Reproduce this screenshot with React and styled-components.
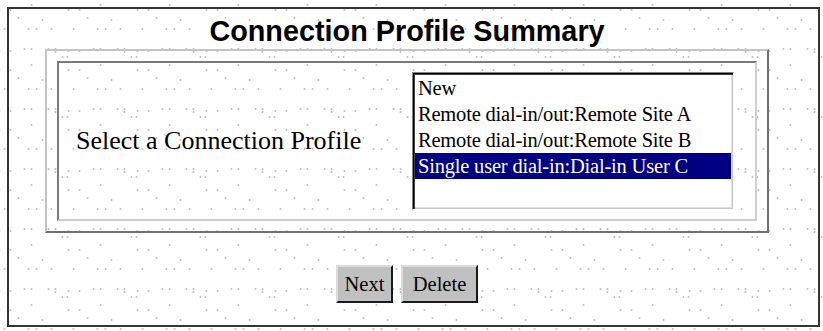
import React from "react";
import styled, { createGlobalStyle } from "styled-components";

const dots = [
  [4, 1], [19, 1], [41, 1], [65, 1], [36, 23], [47, 23],
  [16, 21], [23, 21], [23, 24], [61, 21], [68, 21], [30, 29],
  [35, 29], [68, 37], [36, 42], [47, 42], [10, 52], [55, 50],
];

const dotLayers = dots
  .map(() => "radial-gradient(circle, #c2c2c2 0.7px, transparent 1.3px)")
  .join(", ");
const dotPositions = dots.map(([x, y]) => `${x - 2}px ${y - 2}px`).join(", ");

const GlobalStyle = createGlobalStyle`
  html, body {
    margin: 0;
    padding: 0;
    background: #ffffff;
  }
  body {
    font-family: "Liberation Serif", "Times New Roman", serif;
    background-image: ${dotLayers};
    background-size: 69px 60px;
    background-position: ${dotPositions};
    background-repeat: repeat;
    width: 823px;
    height: 331px;
    overflow: hidden;
  }
`;

const Page = styled.div`
  padding: 7px;
`;

const Frame = styled.div`
  box-sizing: border-box;
  width: 813px;
  height: 320px;
  border: 2px solid #353535;
  padding-top: 6px;
`;

const Column = styled.div`
  width: 724px;
  margin-left: 36px;
  display: flex;
  flex-direction: column;
  align-items: stretch;
`;

const Title = styled.h1`
  margin: 0 0 2px;
  height: 32px;
  font-family: "Liberation Sans", Arial, sans-serif;
  font-size: 28.8px;
  font-weight: bold;
  line-height: 33px;
  text-align: center;
  color: #000;
`;

const Table = styled.div`
  box-sizing: border-box;
  height: 184px;
  padding: 10px;
  border: 2px solid;
  border-color: #c4c4c4 #707070 #707070 #c4c4c4;
`;

const Cell = styled.div`
  box-sizing: border-box;
  height: 100%;
  border: 2px solid;
  border-color: #7a7a7a #cfcfcf #cfcfcf #7a7a7a;
  display: grid;
  grid-template-columns: 353px 322px;
  align-items: center;
`;

const Label = styled.div`
  padding-left: 17px;
  font-size: 26px;
  color: #000;
`;

const ListBox = styled.div`
  box-sizing: border-box;
  height: 138px;
  background: #fff;
  border: 1px solid;
  border-color: #808080 #ffffff #ffffff #808080;
  box-shadow: inset 1px 1px 0 #000, inset 2px 2px 0 #404040,
    inset -1px -1px 0 #c8c8c8, inset -2px -2px 0 #e0e0e0;
  padding: 2px;
`;

const Option = styled.div`
  height: 26px;
  line-height: 26px;
  padding-left: 3px;
  font-size: 20.5px;
  letter-spacing: -0.2px;
  white-space: nowrap;
  background: ${(p) => (p.$selected ? "#000080" : "transparent")};
  color: ${(p) => (p.$selected ? "#ffffff" : "#000000")};
`;

const ButtonRow = styled.div`
  display: flex;
  justify-content: center;
  gap: 8px;
  margin-top: 32px;
`;

const Button = styled.button`
  box-sizing: border-box;
  width: ${(p) => p.$w}px;
  height: 38px;
  padding: 0;
  background: #c0c0c0;
  border: 2px solid;
  border-color: #dcdcdc #1a1a1a #1a1a1a #dcdcdc;
  font-family: "Liberation Serif", "Times New Roman", serif;
  font-size: 20.5px;
  color: #000;
`;

const profiles = [
  "New",
  "Remote dial-in/out:Remote Site A",
  "Remote dial-in/out:Remote Site B",
  "Single user dial-in:Dial-in User C",
];

export default function App() {
  return (
    <>
      <GlobalStyle />
      <Page>
        <Frame>
          <Column>
            <Title>Connection Profile Summary</Title>
            <Table>
              <Cell>
                <Label>Select a Connection Profile</Label>
                <ListBox>
                  {profiles.map((p, i) => (
                    <Option key={p} $selected={i === 3}>
                      {p}
                    </Option>
                  ))}
                </ListBox>
              </Cell>
            </Table>
            <ButtonRow>
              <Button $w={57}>Next</Button>
              <Button $w={77}>Delete</Button>
            </ButtonRow>
          </Column>
        </Frame>
      </Page>
    </>
  );
}
